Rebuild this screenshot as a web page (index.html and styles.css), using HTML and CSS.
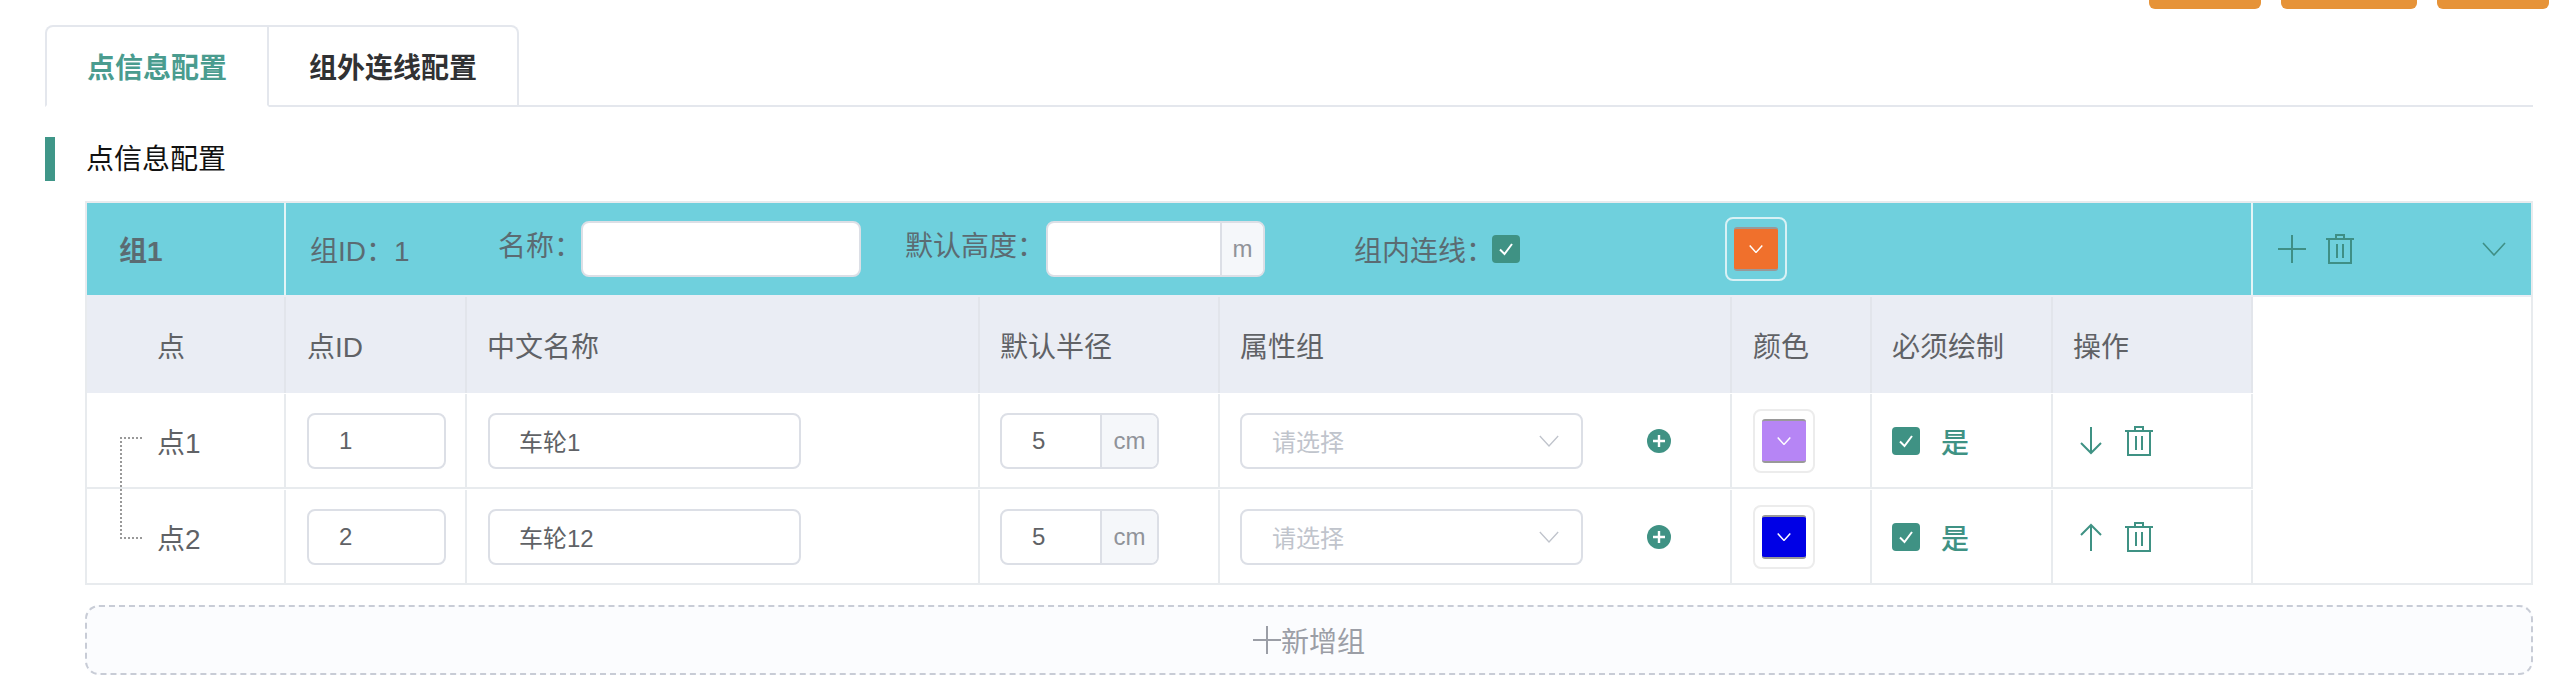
FILE: index.html
```html
<!DOCTYPE html>
<html lang="en">
<head>
    <meta charset="UTF-8">
    <meta name="viewport" content="width=device-width, initial-scale=1.0">
    <title>点信息配置</title>
    <link rel="stylesheet" href="styles.css">
</head>
<body>

    <!-- Icons -->
    <svg class="icon-defs" width="0" height="0">
        <symbol id="i-trash" viewBox="0 0 28 30">
            <path d="M0 5h28M10 5V1h8v4M3 5v24h22V5M11 10v14M17 10v14" fill="none" stroke="currentColor" stroke-width="2"/>
        </symbol>
        <symbol id="i-plus" viewBox="0 0 28 28">
            <path d="M14 0v28M0 14h28" fill="none" stroke="currentColor" stroke-width="2"/>
        </symbol>
        <symbol id="i-chevron" viewBox="0 0 24 14">
            <path d="M1 1l11 12L23 1" fill="none" stroke="currentColor"/>
        </symbol>
        <symbol id="i-check" viewBox="0 0 28 28">
            <path d="M8 14.5l4.5 4.5L20 9" fill="none" stroke="#fff" stroke-width="2"/>
        </symbol>
        <symbol id="i-down" viewBox="0 0 24 28">
            <path d="M12 0v26M2 16l10 10 10-10" fill="none" stroke="currentColor" stroke-width="2"/>
        </symbol>
        <symbol id="i-up" viewBox="0 0 24 28">
            <path d="M12 28V2M2 12L12 2l10 10" fill="none" stroke="currentColor" stroke-width="2"/>
        </symbol>
        <symbol id="i-circle-plus" viewBox="0 0 24 24">
            <circle cx="12" cy="12" r="12" fill="currentColor"/>
            <path d="M12 6v12M6 12h12" fill="none" stroke="#fff" stroke-width="2.4"/>
        </symbol>
    </svg>

    <!-- Top buttons, scrolled mostly out of view -->
    <div class="toolbar">
        <div class="tool-btn tool-sm"></div>
        <div class="tool-btn tool-lg"></div>
        <div class="tool-btn tool-sm"></div>
    </div>

    <div class="main">
        <!-- Tabs -->
        <div class="tabs">
            <div class="tab active">点信息配置</div>
            <div class="tab">组外连线配置</div>
        </div>

        <div class="section-title">点信息配置</div>

        <!-- Group card -->
        <div class="group">
            <div class="group-head">
                <div class="group-name">组1</div>
                <div class="group-fields">
                    <div class="group-id">组ID：1</div>
                    <div class="field">
                        <span class="field-label label-name">名称：</span>
                        <div class="input input-title"></div>
                    </div>
                    <div class="field">
                        <span class="field-label label-height">默认高度：</span>
                        <div class="input input-height">
                            <span class="input-text"></span>
                            <span class="addon addon-m">m</span>
                        </div>
                    </div>
                    <div class="field">
                        <span class="label-link">组内连线：</span>
                        <span class="checkbox"><svg width="28" height="28"><use href="#i-check"/></svg></span>
                    </div>
                    <div class="picker picker-head">
                        <div class="swatch swatch-orange"><svg width="14" height="8"><use href="#i-chevron"/></svg></div>
                    </div>
                </div>
                <div class="group-actions">
                    <svg width="28" height="28"><use href="#i-plus"/></svg>
                    <svg width="28" height="30"><use href="#i-trash"/></svg>
                    <svg class="collapse" width="24" height="14"><use href="#i-chevron"/></svg>
                </div>
            </div>

            <div class="group-body">
                <div class="points">
                    <div class="row row-head">
                        <div class="cell cell-point">点</div>
                        <div class="cell cell-wide">点ID</div>
                        <div class="cell">中文名称</div>
                        <div class="cell">默认半径</div>
                        <div class="cell">属性组</div>
                        <div class="cell cell-wide">颜色</div>
                        <div class="cell">必须绘制</div>
                        <div class="cell">操作</div>
                    </div>

                    <div class="row row-first">
                        <div class="cell cell-point tree-start">点1</div>
                        <div class="cell cell-wide"><div class="input input-id"><span class="input-text">1</span></div></div>
                        <div class="cell cell-wide"><div class="input input-name"><span class="input-text">车轮1</span></div></div>
                        <div class="cell">
                            <div class="input input-radius">
                                <span class="input-text">5</span>
                                <span class="addon">cm</span>
                            </div>
                        </div>
                        <div class="cell">
                            <div class="input input-select">
                                <span class="input-text placeholder">请选择</span>
                                <svg class="select-arrow" width="20" height="12"><use href="#i-chevron"/></svg>
                            </div>
                            <svg class="add-attr" width="24" height="24"><use href="#i-circle-plus"/></svg>
                        </div>
                        <div class="cell cell-wide">
                            <div class="picker">
                                <div class="swatch swatch-purple"><svg width="14" height="8"><use href="#i-chevron"/></svg></div>
                            </div>
                        </div>
                        <div class="cell">
                            <span class="checkbox"><svg width="28" height="28"><use href="#i-check"/></svg></span>
                            <span class="yes">是</span>
                        </div>
                        <div class="cell cell-ops">
                            <svg width="24" height="28"><use href="#i-down"/></svg>
                            <svg width="28" height="30"><use href="#i-trash"/></svg>
                        </div>
                    </div>

                    <div class="row">
                        <div class="cell cell-point">点2</div>
                        <div class="cell cell-wide"><div class="input input-id"><span class="input-text">2</span></div></div>
                        <div class="cell cell-wide"><div class="input input-name"><span class="input-text">车轮12</span></div></div>
                        <div class="cell">
                            <div class="input input-radius">
                                <span class="input-text">5</span>
                                <span class="addon">cm</span>
                            </div>
                        </div>
                        <div class="cell">
                            <div class="input input-select">
                                <span class="input-text placeholder">请选择</span>
                                <svg class="select-arrow" width="20" height="12"><use href="#i-chevron"/></svg>
                            </div>
                            <svg class="add-attr" width="24" height="24"><use href="#i-circle-plus"/></svg>
                        </div>
                        <div class="cell cell-wide">
                            <div class="picker">
                                <div class="swatch swatch-blue"><svg width="14" height="8"><use href="#i-chevron"/></svg></div>
                            </div>
                        </div>
                        <div class="cell">
                            <span class="checkbox"><svg width="28" height="28"><use href="#i-check"/></svg></span>
                            <span class="yes">是</span>
                        </div>
                        <div class="cell cell-ops">
                            <svg width="24" height="28"><use href="#i-up"/></svg>
                            <svg width="28" height="30"><use href="#i-trash"/></svg>
                        </div>
                    </div>
                </div>
            </div>
        </div>

        <!-- Add group -->
        <div class="add-group">
            <svg width="28" height="28"><use href="#i-plus"/></svg>
            <span>新增组</span>
        </div>
    </div>

</body>
</html>
```

FILE: styles.css
```css
/* Basic Reset */
* {
    margin: 0;
    padding: 0;
    box-sizing: border-box;
}

body {
    background: #fff;
    color: #606266;
    font-family: "Liberation Sans", "Noto Sans CJK SC", sans-serif;
    font-size: 28px;
    overflow: hidden;
    stroke-width: 1.6;
}

.icon-defs {
    position: absolute;
}

/* Top buttons */
.toolbar {
    display: flex;
    justify-content: flex-end;
    gap: 20px;
    height: 9px;
    padding-right: 9px;
}

.tool-btn {
    background: #e69338;
    border-radius: 0 0 6px 6px;
}

.tool-sm {
    width: 112px;
}

.tool-lg {
    width: 136px;
}

.main {
    padding: 16px 25px 0 45px;
}

/* Tabs */
.tabs {
    display: flex;
    height: 82px;
    border-bottom: 2px solid #e4e7ed;
}

.tab {
    display: flex;
    align-items: center;
    height: 82px;
    padding: 0 40px;
    border: 2px solid #e4e7ed;
    border-left: none;
    color: #303133;
    font-weight: 700;
}

.tab:first-child {
    width: 224px;
    border-left: 2px solid #e4e7ed;
    border-radius: 8px 0 0 0;
}

.tab:last-child {
    width: 250px;
    border-radius: 0 8px 0 0;
}

.tab.active {
    border-bottom-color: #fff;
    color: #4a9c8f;
}

.section-title {
    height: 44px;
    margin-top: 30px;
    padding-left: 31px;
    border-left: 10px solid #3f9688;
    color: #111;
    line-height: 46px;
}

/* Group card */
.group {
    margin: 20px 0 0 40px;
    border: 2px solid #e8ebee;
}

.group-head {
    display: flex;
    height: 94px;
    background: #6fd0dd;
    border-bottom: 2px solid #eaedf4;
    color: #5b6b72;
}

.group-name {
    display: flex;
    align-items: center;
    width: 199px;
    padding-left: 32px;
    border-right: 2px solid #e3f4f6;
    font-weight: 700;
}

.group-fields {
    display: grid;
    grid-template-columns: 188px 407px 449px 371px auto;
    align-items: center;
    width: 1967px;
    padding-left: 24px;
    border-right: 2px solid #e3f4f6;
}

.field {
    display: flex;
    align-items: center;
    white-space: nowrap;
}

.field-label {
    flex-shrink: 0;
    margin-bottom: 10px;
}

.label-name {
    width: 83px;
}

.label-height {
    width: 141px;
}

.label-link {
    flex-shrink: 0;
    width: 138px;
}

.input-title {
    width: 280px;
}

.group-actions {
    display: flex;
    align-items: center;
    flex: 1;
    gap: 20px;
    padding: 0 25px;
    color: #3f8f85;
}

.collapse {
    margin-left: auto;
}

/* Form controls */
.input {
    display: flex;
    align-items: center;
    height: 56px;
    background: #fff;
    border: 2px solid #dcdfe6;
    border-radius: 8px;
    color: #606266;
    font-size: 24px;
    overflow: hidden;
}

.input-text {
    flex: 1;
    padding-left: 30px;
}

.input-name .input-text {
    padding-left: 29px;
}

.placeholder {
    color: #c0c4cc;
}

.addon {
    display: flex;
    align-items: center;
    justify-content: center;
    width: 57px;
    height: 100%;
    background: #f5f7fa;
    border-left: 2px solid #dcdfe6;
    color: #909399;
}

.addon-m {
    width: 43px;
}

.input-height {
    width: 219px;
}

.input-id {
    width: 139px;
}

.input-name {
    width: 313px;
}

.input-radius {
    width: 159px;
}

.input-select {
    width: 343px;
}

.select-arrow {
    margin-right: 22px;
    color: #c0c4cc;
}

.add-attr {
    margin-left: 64px;
    color: #3f9284;
}

.checkbox {
    display: block;
    width: 28px;
    height: 28px;
    background: #3f9284;
    border-radius: 4px;
}

.checkbox svg {
    display: block;
}

/* Colour picker */
.picker {
    display: flex;
    align-items: center;
    justify-content: center;
    width: 62px;
    height: 64px;
    border: 2px solid #ececec;
    border-radius: 8px;
}

.picker-head {
    border-color: #d8f1f5;
}

.swatch {
    display: flex;
    align-items: center;
    justify-content: center;
    width: 44px;
    height: 44px;
    border-top: 2px solid #999;
    border-bottom: 2px solid #999;
    border-radius: 3px;
    color: #fff;
}

.swatch svg {
    stroke-width: 2.6;
}

.swatch-orange {
    background: #f0702c;
}

.swatch-purple {
    background: #b685f5;
}

.swatch-blue {
    background: #0000e6;
}

/* Table rows */
.group-body {
    display: flex;
}

.points {
    width: 2166px;
}

.row {
    display: grid;
    grid-template-columns: 199px 181px 513px 240px 512px 140px 181px 200px;
    height: 94px;
    padding-top: 1px;
}

.row-first {
    height: 96px;
    border-bottom: 2px solid #e8ebee;
}

.row-head {
    height: 96px;
    padding-top: 0;
    background: #eaedf4;
}

.cell {
    display: flex;
    align-items: center;
    padding-left: 20px;
    border-right: 2px solid #e8ebee;
}

.cell-wide {
    padding-left: 21px;
}

.row-head .cell {
    border-right-color: #e2e5eb;
}

.cell-point {
    position: relative;
    padding-left: 70px;
}

/* Dotted tree line joining the points of a group */
.tree-start::before {
    content: "";
    position: absolute;
    top: 43px;
    left: 33px;
    width: 20px;
    height: 98px;
    border: 2px dotted #999;
    border-right: none;
}

.cell-ops {
    gap: 22px;
    color: #3f9284;
    padding-left: 26px;
}

.yes {
    margin-left: 21px;
    color: #3f9284;
    font-weight: 500;
}

/* Add group */
.add-group {
    display: flex;
    align-items: center;
    justify-content: center;
    height: 70px;
    margin: 20px 0 0 40px;
    background: #fbfcfe;
    border: 2px dashed #c8ccd6;
    border-radius: 14px;
    color: #9b9ea6;
}
```
